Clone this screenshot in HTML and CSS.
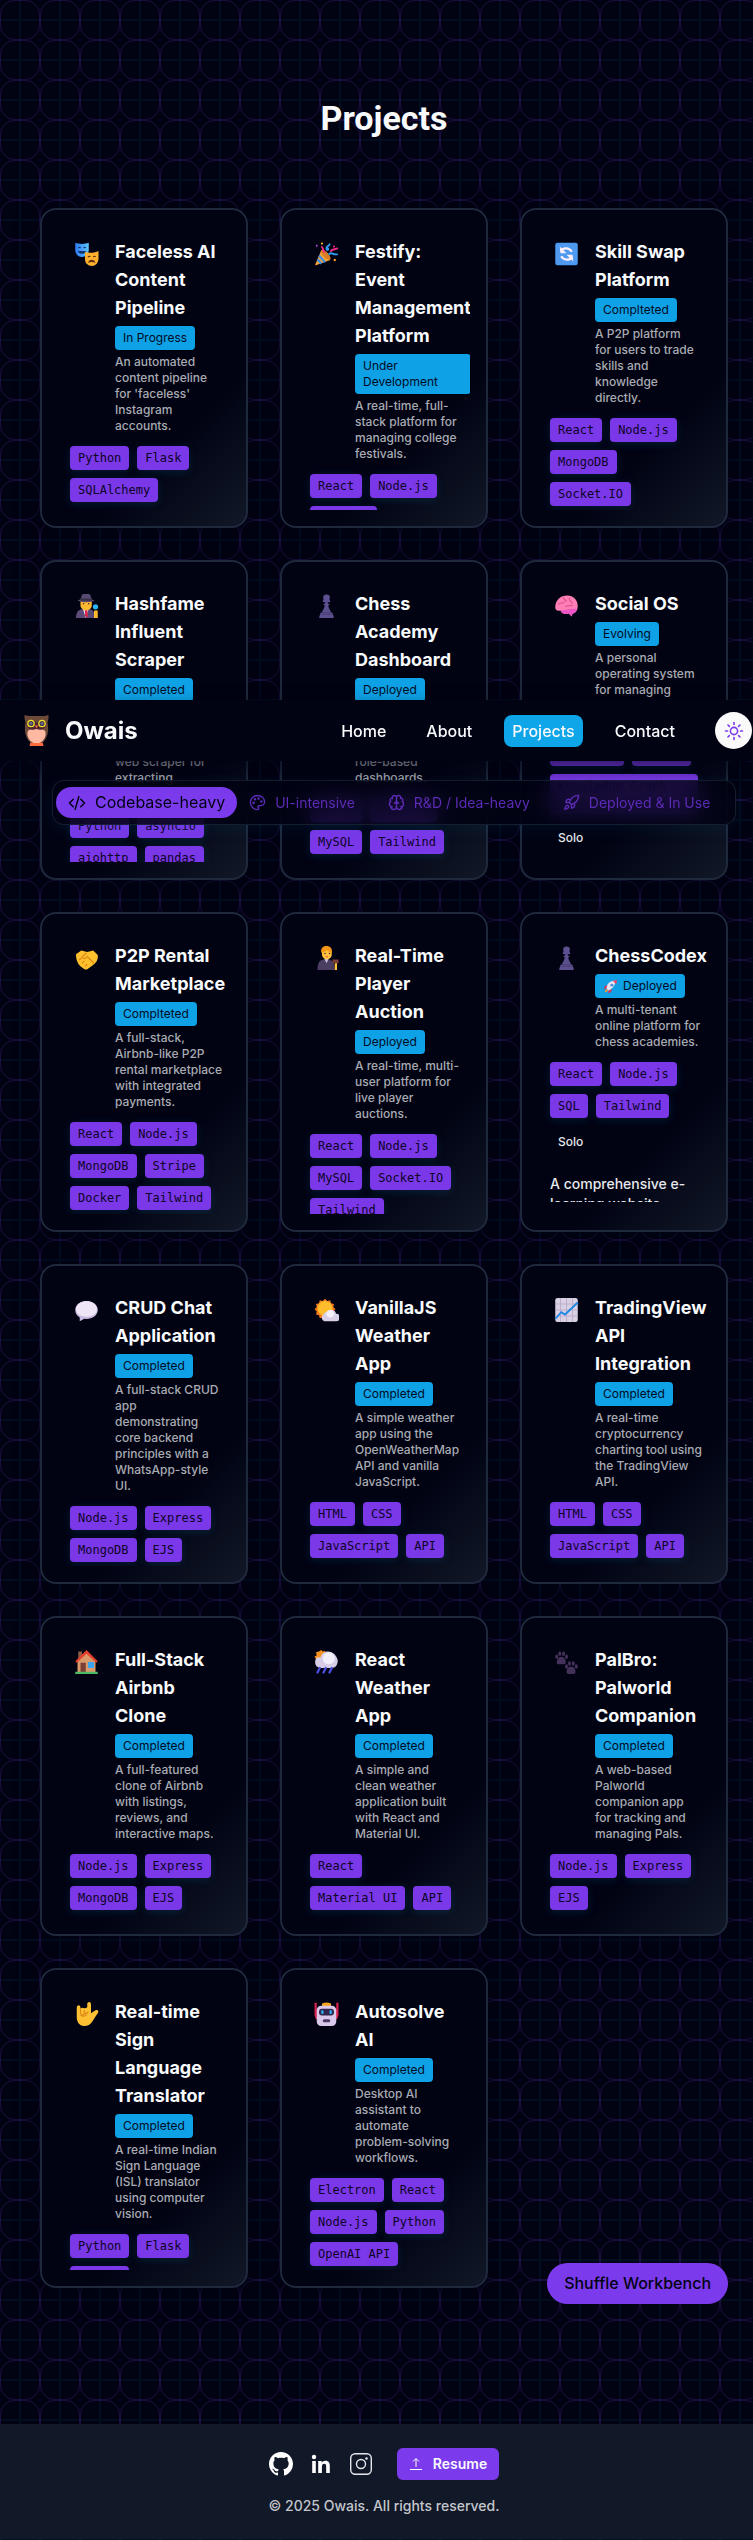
FILE: index.html
```html
<!DOCTYPE html>
<html lang="en">
<head>
<meta charset="utf-8">
<meta name="viewport" content="width=device-width, initial-scale=1">
<title>Projects | Owais</title>
<link rel="stylesheet" href="styles.css">
</head>
<body>
<div class="page">

<header class="navbar">
  <a class="brand" href="#">
    <svg class="owl" viewBox="0 0 24 31" aria-hidden="true">
      <path d="M6 27h12l1 4H5z" fill="#ff6a3d"/>
      <path d="M0 0c3 1 5 1 7 1h10c2 0 4 0 7-1 0 3 0 5-1 7 1 5 1 11-1 15-1 3-3 5-5 6H7c-2-1-4-3-5-6C0 18 0 12 1 7 0 5 0 3 0 0z" fill="#6d4a38"/>
      <path d="M3 17c2-5 16-5 18 0 1 5-3 10-6 11H9c-3-1-7-6-6-11z" fill="#ffb8a2"/>
      <path d="M2 8c2-4 8-4 10 0 2-4 8-4 10 0 0 6-5 8-10 6-5 2-10 0-10-6z" fill="#4a2430"/>
      <circle cx="6.500" cy="8.500" r="3.200" fill="#3b3a4a" stroke="#f4e02c" stroke-width="1.300"/>
      <circle cx="17.500" cy="8.500" r="3.200" fill="#3b3a4a" stroke="#f4e02c" stroke-width="1.300"/>
      <circle cx="6.500" cy="8.500" r="1.400" fill="#6f6488"/><circle cx="17.500" cy="8.500" r="1.400" fill="#6f6488"/>
      <path d="M10.500 10.500h3L12 13.500z" fill="#ff6a3d"/>
    </svg>
    <span>Owais</span>
  </a>
  <nav class="links" aria-label="Main">
    <a href="#home">Home</a>
    <a href="#about">About</a>
    <a href="#projects" class="current">Projects</a>
    <a href="#contact">Contact</a>
    <button class="theme" type="button" aria-label="Toggle theme">
      <svg viewBox="0 0 20 20" fill="none" stroke="#7c3aed" stroke-width="1.600" stroke-linecap="round"><circle cx="10" cy="10" r="3.600"/><path d="M10 1.500v2M10 16.500v2M1.500 10h2M16.500 10h2M4 4l1.400 1.400M14.600 14.600L16 16M4 16l1.400-1.400M14.600 5.400L16 4"/></svg>
    </button>
  </nav>
</header>

<div class="filters" role="group" aria-label="Project categories">
  <button type="button" class="filter active">
    <svg viewBox="0 0 24 24"><path d="M17 17l5-5-5-5M7 7l-5 5 5 5M14.500 3.500l-5 17"/></svg>Codebase-heavy</button>
  <button type="button" class="filter">
    <svg viewBox="0 0 24 24"><path d="M12 2C6.500 2 2 6.500 2 12s4.500 10 10 10c.9 0 1.650-.75 1.650-1.690 0-.43-.18-.83-.44-1.120-.29-.29-.44-.65-.44-1.130a1.640 1.640 0 0 1 1.670-1.670h2c3.050 0 5.550-2.500 5.550-5.550C22 6 17.500 2 12 2z"/><circle cx="13.500" cy="6.500" r=".8"/><circle cx="17.500" cy="10.500" r=".8"/><circle cx="8.500" cy="7.500" r=".8"/><circle cx="6.500" cy="12.500" r=".8"/></svg>UI-intensive</button>
  <button type="button" class="filter">
    <svg viewBox="0 0 24 24"><path d="M12 5a3 3 0 1 0-6 .13 4 4 0 0 0-2.530 5.770 4 4 0 0 0 .56 6.590A4 4 0 1 0 12 18zM12 5a3 3 0 1 1 6 .13 4 4 0 0 1 2.530 5.770 4 4 0 0 1-.56 6.590A4 4 0 1 1 12 18zM15 13a4.500 4.500 0 0 1-3-4 4.500 4.500 0 0 1-3 4M6 5.130a3 3 0 0 0 .4 1.370M3.500 10.900q.3-.3.600-.4M6 18a4 4 0 0 1-2-.5M18 5.130a3 3 0 0 1-.4 1.370M20.500 10.900q-.3-.3-.6-.4M18 18a4 4 0 0 0 2-.5"/></svg>R&amp;D / Idea-heavy</button>
  <button type="button" class="filter">
    <svg viewBox="0 0 24 24"><path d="M4.500 16.500c-1.500 1.260-2 5-2 5s3.740-.5 5-2c.71-.84.700-2.130-.09-2.910a2.180 2.180 0 0 0-2.910-.09zM12 15l-3-3a22 22 0 0 1 2-3.950A12.880 12.880 0 0 1 22 2c0 2.720-.78 7.500-6 11a22.350 22.350 0 0 1-4 2zM9 12H4s.55-3.030 2-4c1.620-1.080 5 0 5 0M12 15v5s3.030-.55 4-2c1.080-1.620 0-5 0-5"/></svg>Deployed &amp; In Use</button>
</div>

<main id="projects">
  <h1>Projects</h1>
  <div class="grid">

    <article class="card"><div class="face">
      <div class="head">
        <svg class="emoji" viewBox="0 0 32 32"><defs><linearGradient id="mb"><stop stop-color="#2f7bf5"/><stop offset="1" stop-color="#5cc5ff"/></linearGradient></defs><path d="M1 1c5 2 13 2 18 0v10c0 5-5 9-9 9-5 0-9-4-9-9z" fill="url(#mb)"/><path d="M5 8q2-2 3 0M12 8q2-2 3 0" stroke="#12356e" stroke-width="1.600" fill="none"/><path d="M4.500 12h11c-1 5-10 5-11 0z" fill="#12356e"/><path d="M14 13c5 2 13 2 18-1v10c0 6-4 10-9 10s-9-4-9-9z" fill="#ffb02e"/><path d="M18 20q2-2 3 0M25 20q2-2 3 0" stroke="#5b2b12" stroke-width="1.600" fill="none"/><path d="M18 28c1-6 9-6 10 0q-5-3-10 0z" fill="#5b2b12"/></svg>
        <div class="info"><h2>Faceless AI Content Pipeline</h2><span class="status">In Progress</span><p>An automated content pipeline for 'faceless' Instagram accounts.</p></div>
      </div>
      <ul class="tags"><li>Python</li><li>Flask</li><li>SQLAlchemy</li></ul>
    </div></article>

    <article class="card"><div class="face">
      <div class="head">
        <svg class="emoji" viewBox="0 0 32 32"><path d="M9 11c5 2 10 7 12 13L2 31c-1 0-1-1-1-1z" fill="#f8a22f"/><path d="M6 18l8 9M4 23l5 6" stroke="#3e8ce8" stroke-width="3"/><ellipse cx="15" cy="17" rx="3.500" ry="8.500" transform="rotate(-43 15 17)" fill="#d67d25"/><path d="M9 6c4 2 1 6 5 8" stroke="#f62b84" stroke-width="2.600" fill="none"/><path d="M20 2c1 4-5 3-4 7s4 0 1-1M19 17c3-6 6 2 12-1" stroke="#2e9ff2" stroke-width="2.400" fill="none"/><path d="M21 13c3-5 6-2 10-5" stroke="#f62b84" stroke-width="2.400" fill="none"/><circle cx="10" cy="2" r="1.400" fill="#ffc21f"/><circle cx="26" cy="6" r="1.400" fill="#f62b84"/><circle cx="3" cy="5" r="1.300" fill="#b847e8"/><circle cx="27" cy="24" r="1.600" fill="#ff9a2e"/></svg>
        <div class="info"><h2>Festify: Event Management Platform</h2><span class="status">Under Development</span><p>A real-time, full-stack platform for managing college festivals.</p></div>
      </div>
      <ul class="tags"><li>React</li><li>Node.js</li><li>MongoDB</li></ul>
    </div></article>

    <article class="card"><div class="face">
      <div class="head">
        <svg class="emoji" viewBox="0 0 32 32"><rect x="1" y="1" width="30" height="30" rx="3" fill="#4d9af0"/><path d="M24 20a9 9 0 0 1-15-1M8 12a9 9 0 0 1 15 1" stroke="#fff0fb" stroke-width="3" fill="none"/><path d="M7 6l1 9h8zM25 26l-1-9h-8z" fill="#fff0fb"/></svg>
        <div class="info"><h2>Skill Swap Platform</h2><span class="status">Complteted</span><p>A P2P platform for&nbsp;users to trade skills and knowledge directly.</p></div>
      </div>
      <ul class="tags"><li>React</li><li>Node.js</li><li>MongoDB</li><li>Socket.IO</li></ul>
    </div></article>

    <article class="card"><div class="face">
      <div class="head">
        <svg class="emoji" viewBox="0 0 32 32"><path d="M2 32c0-8 3-11 9-12h9c5 1 7 5 7 12z" fill="#5b4b78"/><path d="M11 19h8l-4 13z" fill="#e7dff5"/><path d="M14 21h3l1 8-2 3-2-3z" fill="#d6284e"/><path d="M8 9h15v6c0 9-15 9-15 0z" fill="#ffb92e"/><path d="M8 7l2-6q6-3 11 0l2 6 4 2q-12 4-23 0z" fill="#574a72"/><path d="M8 6h15v3H8z" fill="#393048"/><circle cx="12" cy="13" r="1" fill="#3c2637"/><circle cx="19" cy="13" r="1" fill="#3c2637"/><circle cx="28" cy="17" r="3.500" fill="#28b8f5"/><path d="M26 22h5v10h-5z" fill="#ffb92e"/></svg>
        <div class="info"><h2>Hashfame Influent Scraper</h2><span class="status">Completed</span><p>A powerful asynchronous multi-threaded web scraper for extracting influencer data.</p></div>
      </div>
      <ul class="tags"><li>Python</li><li>asyncio</li><li>aiohttp</li><li>pandas</li></ul>
    </div></article>

    <article class="card"><div class="face">
      <div class="head">
        <svg class="emoji" viewBox="0 0 32 32"><g fill="#5d5090"><circle cx="16" cy="5" r="4.500"/><rect x="11" y="8" width="10" height="3" rx="1.500"/><path d="M14 11h4c0 7 2 10 5 14H9c3-4 5-7 5-14z"/><rect x="12" y="13" width="8" height="2" rx="1"/><path d="M8 25h16l2 7H6z"/></g><path d="M8 27h16" stroke="#413560"/></svg>
        <div class="info"><h2>Chess Academy Dashboard</h2><span class="status">Deployed</span><p>A complete management platform offering role-based dashboards.</p></div>
      </div>
      <ul class="tags"><li>React</li><li>Node.js</li><li>MySQL</li><li>Tailwind</li></ul>
    </div></article>

    <article class="card"><div class="face">
      <div class="head">
        <svg class="emoji" viewBox="0 0 32 32"><path d="M1 18C1 8 8 2 17 2c8 0 14 6 14 14 0 6-3 9-7 10l-1 4-4-4c-5 2-10 0-11-4-5 1-7-1-7-4z" fill="#ff7fb4"/><path d="M8 22c6 0 14-3 22-2-1 4-3 6-6 6l-1 4-4-4c-5 2-10 0-11-4z" fill="#ed55c6"/><path d="M5 14c3-4 6 0 9-4M12 4c-1 4 4 3 4 6M20 5c-2 5 5 4 3 8M15 17c3-3 6 0 9-2" stroke="#d94a8e" fill="none" stroke-width="1.500"/></svg>
        <div class="info"><h2>Social OS</h2><span class="status">Evolving</span><p>A personal operating system for managing relationships and contacts.</p></div>
      </div>
      <ul class="tags"><li>Electron</li><li>Python</li><li>Knowledge Graph Engine</li></ul>
      <span class="team">Solo</span>
    </div></article>

    <article class="card"><div class="face">
      <div class="head">
        <svg class="emoji" viewBox="0 0 32 32"><path d="M2 11l7-5 8 2 8-2 6 6c1 7-3 11-7 14l-7 5c-2 1-4 0-5-1-5-3-10-8-10-19z" fill="#ffc02e"/><path d="M16 9l-6 6c2 3 5 2 7-1l9 9M10 23l3-3M14 27l3-3M6 19l3-3" stroke="#df8918" stroke-width="1.600" fill="none"/></svg>
        <div class="info"><h2>P2P Rental Marketplace</h2><span class="status">Complteted</span><p>A full-stack, Airbnb-like P2P rental marketplace with integrated payments.</p></div>
      </div>
      <ul class="tags"><li>React</li><li>Node.js</li><li>MongoDB</li><li>Stripe</li><li>Docker</li><li>Tailwind</li></ul>
    </div></article>

    <article class="card"><div class="face">
      <div class="head">
        <svg class="emoji" viewBox="0 0 32 32"><path d="M4 32c0-9 2-13 8-14h7c5 1 8 5 8 14z" fill="#4c3e61"/><path d="M13 17h6l-3 6z" fill="#c9bddd"/><path d="M10 5h13v6c0 9-13 9-13 0z" fill="#ffc13a"/><path d="M9 9c-1-6 2-9 7-9s8 3 7 9c-3 0-5-2-6-4-2 3-5 3-8 4z" fill="#f29718"/><circle cx="14" cy="10" r="1" fill="#3c2637"/><circle cx="20" cy="10" r="1" fill="#3c2637"/><path d="M15 14q2 1 3 0" stroke="#d6284e" fill="none"/><path d="M24 18h8v5h-8z" fill="#7a4038"/><path d="M27 23h3v9h-3z" fill="#ffc13a"/></svg>
        <div class="info"><h2>Real-Time Player Auction</h2><span class="status">Deployed</span><p>A real-time, multi-user platform for live player auctions.</p></div>
      </div>
      <ul class="tags"><li>React</li><li>Node.js</li><li>MySQL</li><li>Socket.IO</li><li>Tailwind</li></ul>
    </div></article>

    <article class="card"><div class="face">
      <div class="head">
        <svg class="emoji" viewBox="0 0 32 32"><g fill="#5d5090"><circle cx="16" cy="5" r="4.500"/><rect x="11" y="8" width="10" height="3" rx="1.500"/><path d="M14 11h4c0 7 2 10 5 14H9c3-4 5-7 5-14z"/><rect x="12" y="13" width="8" height="2" rx="1"/><path d="M8 25h16l2 7H6z"/></g><path d="M8 27h16" stroke="#413560"/></svg>
        <div class="info"><h2>ChessCodex</h2><span class="status"><svg class="rocket" viewBox="0 0 16 16"><path d="M4 7l-3 1-1 4 4-2zM9 12l-1 3-4 1 2-4z" fill="#e0305c"/><path d="M5 13L3 11c0-6 4-9 10-9 0 5-3 9-8 11z" fill="#e9e4f2"/><path d="M10 2l5-1-1 5z" fill="#f0436b"/><circle cx="9" cy="7" r="1.700" fill="#4c8fd6"/><path d="M1 15c0-3 2-4 3-3s0 3-3 3z" fill="#ff9a2e"/></svg>Deployed</span><p>A multi-tenant online platform for chess academies.</p></div>
      </div>
      <ul class="tags"><li>React</li><li>Node.js</li><li>SQL</li><li>Tailwind</li></ul>
      <span class="team">Solo</span>
      <p class="details">A comprehensive e-learning website designed for chess academies.</p>
    </div></article>

    <article class="card"><div class="face">
      <div class="head">
        <svg class="emoji" viewBox="0 0 32 32"><path d="M16 4c8 0 15 5 15 12s-7 12-15 12l-3-.3L7 31v-5c-4-2-6-6-6-10C1 9 8 4 16 4z" fill="#c9badf"/><path d="M16 4c8 0 14 5 14 11s-6 10-14 10S2 21 2 15 8 4 16 4z" fill="#eee6f6"/></svg>
        <div class="info"><h2>CRUD Chat Application</h2><span class="status">Completed</span><p>A full-stack CRUD app demonstrating core backend principles with a WhatsApp-style UI.</p></div>
      </div>
      <ul class="tags"><li>Node.js</li><li>Express</li><li>MongoDB</li><li>EJS</li></ul>
    </div></article>

    <article class="card"><div class="face">
      <div class="head">
        <svg class="emoji" viewBox="0 0 32 32"><path d="M14 1l3 3 4-1 1 4 4 1-1 4 3 3-3 3 1 4-4 1-1 4-4-1-3 3-3-3-4 1-1-4-4-1 1-4-3-3 3-3-1-4 4-1 1-4 4 1z" fill="#f57a18"/><circle cx="14" cy="14" r="10" fill="#ffbd2b"/><path d="M13 31a5 5 0 0 1-1-9 6 6 0 0 1 5-4 7 7 0 0 1 12 3 5 5 0 0 1 0 10z" fill="#d9d0e8"/><circle cx="21" cy="21" r="5" fill="#f4f0fa"/></svg>
        <div class="info"><h2>VanillaJS Weather App</h2><span class="status">Completed</span><p>A simple weather app using the OpenWeatherMap API and vanilla JavaScript.</p></div>
      </div>
      <ul class="tags"><li>HTML</li><li>CSS</li><li>JavaScript</li><li>API</li></ul>
    </div></article>

    <article class="card"><div class="face">
      <div class="head">
        <svg class="emoji" viewBox="0 0 32 32"><rect x="1" y="0" width="30" height="32" rx="3" fill="#d9d0e4"/><path d="M8 0v32M16 0v32M24 0v32M1 8h30M1 16h30M1 24h30" stroke="#b3a7c6"/><path d="M1 28l8-9 5 3L31 6" stroke="#1e88e5" stroke-width="2.500" fill="none"/></svg>
        <div class="info"><h2>TradingView API Integration</h2><span class="status">Completed</span><p>A real-time cryptocurrency charting tool using the TradingView API.</p></div>
      </div>
      <ul class="tags"><li>HTML</li><li>CSS</li><li>JavaScript</li><li>API</li></ul>
    </div></article>

    <article class="card"><div class="face">
      <div class="head">
        <svg class="emoji" viewBox="0 0 32 32"><path d="M5 2h5v10H5z" fill="#8d5a43"/><path d="M4 14L16 3l12 11v16H4z" fill="#d9996b"/><path d="M1 15L16 0l15 15-2 2L16 5 3 17z" fill="#e5402f"/><path d="M8 17h7v13H8z" fill="#7a4038"/><path d="M18 16h8v8h-8z" fill="#3ba4ee"/><path d="M1 29h30v3H1z" fill="#4cba63"/></svg>
        <div class="info"><h2>Full-Stack Airbnb Clone</h2><span class="status">Completed</span><p>A full-featured clone of Airbnb with listings, reviews, and interactive maps.</p></div>
      </div>
      <ul class="tags"><li>Node.js</li><li>Express</li><li>MongoDB</li><li>EJS</li></ul>
    </div></article>

    <article class="card"><div class="face">
      <div class="head">
        <svg class="emoji" viewBox="0 0 32 32"><path d="M9 0l2 2 3-1 1 4 3 3-9 8-6-1-1-3-2-3 3-2-1-4 4-1z" fill="#f9921e"/><path d="M8 24c-5 0-8-5-7-10 1-4 4-5 7-4 1-5 5-8 10-8 7 0 12 6 13 12 0 6-3 10-8 10z" fill="#d6cde6"/><circle cx="19" cy="11" r="8" fill="#f3effa"/><path d="M7 24l-3 6M15 24l-3 6M23 24l-3 6" stroke="#4a4fe0" stroke-width="3" stroke-linecap="round"/></svg>
        <div class="info"><h2>React Weather App</h2><span class="status">Completed</span><p>A simple and clean weather application built with React and Material UI.</p></div>
      </div>
      <ul class="tags"><li>React</li><li>Material UI</li><li>API</li></ul>
    </div></article>

    <article class="card"><div class="face">
      <div class="head">
        <svg class="emoji" viewBox="0 0 32 32"><g fill="#44315a"><path d="M9 9c4 0 7 5 6 8s-3 2-6 2-6 1-6-2 2-8 6-8z"/><ellipse cx="3" cy="9" rx="2" ry="3"/><ellipse cx="7" cy="5" rx="2" ry="3"/><ellipse cx="12" cy="5" rx="2" ry="3"/><ellipse cx="16" cy="9" rx="2" ry="3"/><path d="M22 22c4 0 6 4 6 7s-3 3-6 3-6 0-6-3 2-7 6-7z"/><ellipse cx="16" cy="22" rx="2" ry="3"/><ellipse cx="20" cy="18" rx="2" ry="3"/><ellipse cx="25" cy="18" rx="2" ry="3"/><ellipse cx="29" cy="22" rx="2" ry="3"/></g></svg>
        <div class="info"><h2>PalBro: Palworld Companion</h2><span class="status">Completed</span><p>A web-based Palworld companion app for tracking and managing Pals.</p></div>
      </div>
      <ul class="tags"><li>Node.js</li><li>Express</li><li>EJS</li></ul>
    </div></article>

    <article class="card"><div class="face">
      <div class="head">
        <svg class="emoji" viewBox="0 0 32 32"><path d="M3 8c0-5 5-5 5 0v1q2-2 4-1t5-1V3c0-4 5-4 5 0v12l6-4c3-1 5 1 3 4-3 4-5 8-8 12-2 3-5 5-10 5C6 32 3 26 3 20z" fill="#ffc133"/><path d="M8 9v6c1 3 5 3 5 0v-4c0 6 5 6 5 1M8 17c3 3 6 2 8 0" stroke="#df8918" stroke-width="1.500" fill="none"/></svg>
        <div class="info"><h2>Real-time Sign Language Translator</h2><span class="status">Completed</span><p>A real-time Indian Sign Language (ISL) translator using computer vision.</p></div>
      </div>
      <ul class="tags"><li>Python</li><li>Flask</li><li>OpenCV</li></ul>
    </div></article>

    <article class="card"><div class="face">
      <div class="head">
        <svg class="emoji" viewBox="0 0 32 32"><path d="M0 1h3v8h3v14H2L0 18zM29 1h3v17l-2 5h-4V9h3z" fill="#d6224f"/><path d="M10 2q6-3 12 0v5H10z" fill="#f4a51c"/><rect x="3" y="5" width="26" height="27" rx="6" fill="#d9c8ea"/><rect x="6" y="9" width="20" height="9" rx="4" fill="#35264d"/><rect x="9" y="11" width="3" height="5" rx="1" fill="#25b6f5"/><rect x="20" y="11" width="3" height="5" rx="1" fill="#25b6f5"/><rect x="11" y="23" width="10" height="4" rx="2" fill="#4b3a63"/></svg>
        <div class="info"><h2>Autosolve AI</h2><span class="status">Completed</span><p>Desktop AI assistant to automate problem-solving workflows.</p></div>
      </div>
      <ul class="tags"><li>Electron</li><li>React</li><li>Node.js</li><li>Python</li><li>OpenAI API</li></ul>
    </div></article>

  </div>
  <button class="shuffle" type="button">Shuffle Workbench</button>
</main>

<footer>
  <div class="social">
    <a href="#github" aria-label="GitHub"><svg viewBox="0 0 16 16" fill="#fff"><path d="M8 0C3.580 0 0 3.580 0 8c0 3.540 2.290 6.530 5.470 7.590.4.070.55-.17.55-.38 0-.19-.01-.82-.01-1.490-2.010.37-2.530-.49-2.690-.94-.09-.23-.48-.94-.82-1.130-.28-.15-.68-.52-.01-.53.63-.01 1.080.58 1.230.82.72 1.210 1.870.87 2.330.66.070-.52.28-.87.51-1.070-1.780-.2-3.640-.89-3.640-3.950 0-.87.31-1.590.82-2.150-.08-.2-.36-1.020.08-2.120 0 0 .67-.21 2.200.82.64-.18 1.320-.27 2-.27s1.360.09 2 .27c1.530-1.040 2.200-.82 2.200-.82.44 1.100.16 1.920.08 2.120.51.56.82 1.270.82 2.150 0 3.070-1.870 3.750-3.650 3.950.29.25.54.73.54 1.480 0 1.070-.01 1.930-.01 2.200 0 .21.15.46.55.38A8.010 8.010 0 0 0 16 8c0-4.420-3.580-8-8-8z"/></svg></a>
    <a href="#linkedin" aria-label="LinkedIn"><svg viewBox="0 0 24 24" fill="#fff"><circle cx="5" cy="5" r="2.200"/><path d="M3.200 9h3.600v12H3.200zM9.200 9h3.500v1.700c.7-1.200 2-2 3.700-2 3.400 0 4.400 2.100 4.400 5.300v7h-3.600v-6.300c0-1.700-.3-2.900-2-2.900-1.600 0-2.300 1.200-2.300 2.900V21H9.200z"/></svg></a>
    <a href="#instagram" aria-label="Instagram"><svg viewBox="0 0 24 24" fill="none" stroke="#e5e7eb" stroke-width="1.400"><rect x="1.700" y="1.700" width="20.600" height="20.600" rx="4.500"/><circle cx="12" cy="12" r="4.500"/><circle cx="17.500" cy="6.500" r=".6"/></svg></a>
    <a href="#resume" class="resume"><svg viewBox="0 0 14 14" fill="none" stroke="#fff"><path d="M7 10V2M4 4.500L7 1.500l3 3M1 12.500h12"/></svg>Resume</a>
  </div>
  <p>© 2025 Owais. All rights reserved.</p>
</footer>
</div>
</body>
</html>
```
FILE: styles.css
```css
* { box-sizing: border-box; margin: 0; padding: 0; }

body {
  font-family: Inter, "Liberation Sans", sans-serif;
  font-weight: 500;
  color: #f8fafc;
  background-color: #010313;
  background-image: url("data:image/svg+xml,%3Csvg xmlns='http://www.w3.org/2000/svg' width='40' height='40'%3E%3Cpath d='M0 20h40M20 0v40' stroke='%230ea5e9' stroke-opacity='.06' stroke-width='2'/%3E%3Crect x='.5' y='.5' width='39' height='39' rx='14' fill='none' stroke='%237c3aed' stroke-opacity='.2'/%3E%3C/svg%3E");
}
.page { position: relative; overflow: hidden; }
a { color: inherit; text-decoration: none; }
button { font: inherit; border: 0; cursor: pointer; }
ul { list-style: none; }

/* Navigation */
.navbar {
  position: absolute; top: 700px; left: 0; right: 0; z-index: 3;
  display: flex; align-items: center; justify-content: space-between;
  padding: 12px 1px 12px 24px;
  background: #010313;
  box-shadow: 0 8px 16px rgba(1, 3, 19, .6);
}
.brand { display: flex; align-items: center; gap: 16px; font-size: 24px; line-height: 32px; font-weight: 700; }
.owl { width: 25px; height: 31px; }
.links { display: flex; align-items: center; gap: 24px; font-size: 16px; line-height: 24px; }
.links a { padding: 4px 8px; border-radius: 8px; }
.links .current { background: #0ea5e9; }
.theme {
  width: 37px; height: 37px; margin-left: 8px; border-radius: 50%; background: #fafafa;
  display: flex; align-items: center; justify-content: center;
}
.theme svg { width: 20px; height: 20px; }

/* Category filter */
.filters {
  position: absolute; top: 780px; left: 52px; right: 17px; z-index: 2;
  display: flex; align-items: center;
  padding: 6px 11px 6px 3px;
  border: 1px solid rgba(30, 41, 59, .7); border-radius: 12px;
  background: rgba(1, 3, 19, .8);
  backdrop-filter: blur(12px);
  box-shadow: 0 4px 16px rgba(14, 165, 233, .08);
}
.filter {
  display: flex; align-items: center; gap: 9px;
  padding: 4px 12px; margin-right: 9px; border-radius: 16px;
  background: transparent; color: #5c2bb5;
  font-size: 14px; line-height: 20px; font-weight: 400; white-space: nowrap;
}
.filter:last-child { margin-right: 0; }
.filter svg { width: 17px; height: 17px; fill: none; stroke: currentColor; stroke-width: 2; stroke-linecap: round; stroke-linejoin: round; }
.filter.active { padding: 4px 12px; margin-right: 0; background: #7c3aed; color: #010313; font-size: 16px; line-height: 23px; }
.filter.active svg { width: 18px; height: 18px; }

/* Project grid */
main { position: relative; padding: 88px 25px 136px 40px; }
h1 {
  font-family: Roboto, "Liberation Sans", sans-serif;
  font-size: 34px; line-height: 60px; font-weight: 700; text-align: center;
  margin-bottom: 60px;
}
.grid { display: grid; grid-template-columns: repeat(3, minmax(0, 1fr)); grid-auto-rows: 320px; gap: 32px; }
.card {
  padding: 16px; border: 2px solid #1e293b; border-radius: 16px;
  background: linear-gradient(135deg, #010313 0%, #010313 70%, #111827 100%);
  box-shadow: 0 4px 24px rgba(1, 3, 19, .6);
}
.face { height: 100%; padding: 12px 12px 0; overflow: hidden; display: flex; flex-direction: column; }
.head { display: flex; gap: 12px; flex-shrink: 0; margin-right: -2px; }
.emoji { width: 25px; height: 24px; margin: 4px; flex-shrink: 0; }
.info { flex: 1; }
h2 { font-size: 18px; line-height: 28px; font-weight: 700; }
.status {
  display: inline-block; vertical-align: top; margin: 4px 0;
  padding: 4px 8px; border-radius: 4px;
  background: #0ea1e5; color: #010a24;
  font-size: 12px; line-height: 16px; font-weight: 400;
}
.rocket { width: 14px; height: 14px; margin: 0 5px 0 1px; vertical-align: -3px; }
.info p { font-size: 12px; line-height: 16px; color: #a9abb2; }
.tags { display: flex; flex-wrap: wrap; gap: 8px; margin-top: 12px; flex-shrink: 0; }
.tags li {
  padding: 4px 8px; border-radius: 4px;
  background: #7a38e8; color: #0d0426;
  font-family: "DejaVu Sans Mono", "Liberation Mono", monospace; font-size: 12px; line-height: 16px; font-weight: 400;
  box-shadow: 0 2px 8px rgba(14, 165, 233, .15);
}
.team { margin-top: 12px; padding: 4px 8px; font-size: 12px; line-height: 16px; flex-shrink: 0; color: #e6e8ec; }
.details { flex: 1 1 0; min-height: 0; overflow: hidden; margin: 20px 0 12px; font-size: 14px; line-height: 20px; color: #e6e8ec; }

.shuffle {
  position: absolute; right: 25px; bottom: 120px;
  padding: 8px 17px; border-radius: 21px;
  background: #7c3aed; color: #010313;
  font-size: 16px; line-height: 25px;
}

/* Footer */
footer {
  display: flex; flex-direction: column; align-items: center; gap: 16px;
  padding: 24px 0 23px; margin-bottom: 1px; background: #111827;
}
.social { display: flex; align-items: center; gap: 16px; margin-left: 15px; }
.social a { display: flex; }
.social svg { width: 24px; height: 24px; }
.social .resume {
  align-items: center; gap: 10px; margin-left: 8px; padding: 6px 12px; border-radius: 6px;
  background: #7c3aed; font-size: 14px; line-height: 20px; font-weight: 600;
}
.social .resume svg { width: 14px; height: 14px; }
footer p { font-size: 14px; line-height: 20px; color: #c3c6cc; margin-left: 15px; }
```
